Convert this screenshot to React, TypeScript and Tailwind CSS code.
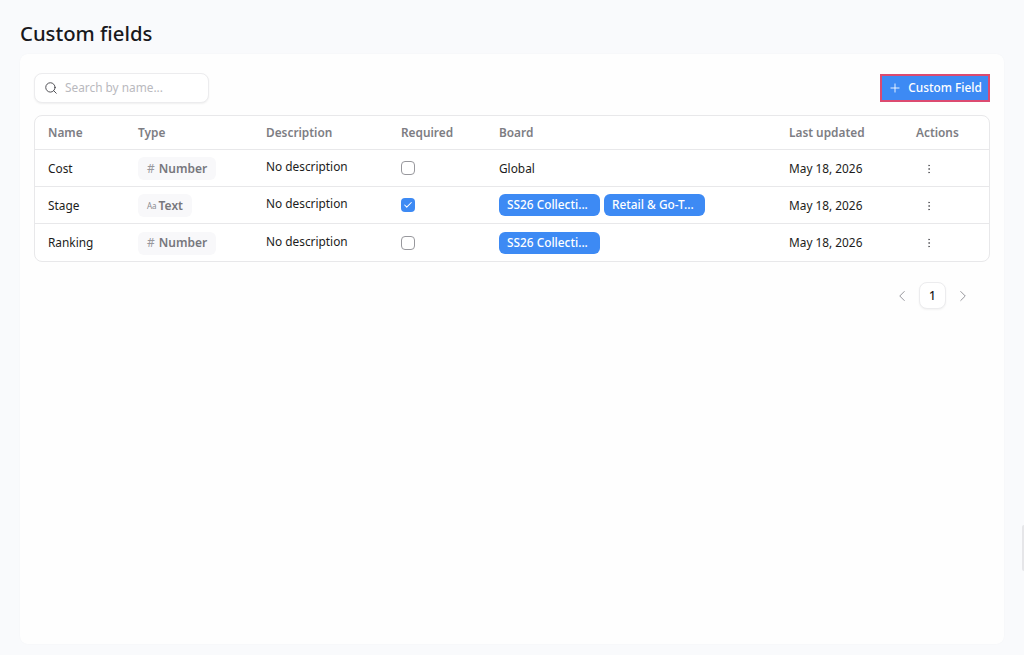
import { Search, Plus, Check, EllipsisVertical, ChevronLeft, ChevronRight } from "lucide-react"

interface FieldRow {
  name: string
  type: "Number" | "Text"
  required: boolean
  boards: string[]
}

const rows: FieldRow[] = [
  { name: "Cost", type: "Number", required: false, boards: [] },
  { name: "Stage", type: "Text", required: true, boards: ["SS26 Collecti...", "Retail & Go-T..."] },
  { name: "Ranking", type: "Number", required: false, boards: ["SS26 Collecti..."] },
]

const headers = ["Name", "Type", "Description", "Required", "Board", "Last updated", "Actions"]

const gridCols = "grid grid-cols-[90px_128px_135px_98px_290px_127px_1fr]"

function TypeBadge({ type }: { type: FieldRow["type"] }) {
  const isNumber = type === "Number"
  return (
    <span className={`inline-flex h-[23px] items-center rounded-md bg-[#f8f8fa] px-[9px] text-[12px] font-semibold text-[#77777d] ${isNumber ? "gap-[4px]" : "gap-[2px]"}`}>
      {isNumber ? (
        <span className="text-[12px] font-normal text-[#98989e]">#</span>
      ) : (
        <span className="text-[8px] font-normal text-[#8a8a90]">Aa</span>
      )}
      {type}
    </span>
  )
}

function Checkbox({ checked }: { checked: boolean }) {
  if (checked) {
    return (
      <span className="flex h-[14px] w-[14px] items-center justify-center rounded-[4px] bg-[#3d8af4]">
        <Check size={10} strokeWidth={2.5} className="text-white" />
      </span>
    )
  }
  return <span className="block h-[14px] w-[14px] rounded-[4px] border border-[#98989d] bg-white" />
}

export default function App() {
  return (
    <div className="relative h-[655px] w-[1024px] overflow-hidden bg-[#f9fafc] px-5 pt-[19px] font-['Noto_Sans',sans-serif] text-[#1c1c20]">
      <h1 className="h-[35px] text-[20.3px] font-medium leading-[28px] text-[#18181c]">Custom fields</h1>

      <div className="h-[590px] w-[984px] rounded-lg bg-[#fefefe] px-[14px] pt-[19px] shadow-[0_0_2px_rgba(0,0,0,0.03)]">
        <div className="flex h-[30px] items-center justify-between">
          <div className="flex h-[30px] w-[175px] items-center gap-[7px] rounded-lg border border-[#ececee] bg-white pl-[9px] shadow-[0_1px_2px_rgba(0,0,0,0.06)]">
            <Search size={14} strokeWidth={1.5} className="text-[#3a3a40]" />
            <span className="text-[11.85px] text-[#b9b9be]">Search by name...</span>
          </div>
          <button className="flex h-[28px] w-[110px] items-center justify-center gap-[6px] border-2 border-[#dc4a70] bg-[#3d8af4] text-[11.85px] font-medium text-white">
            <Plus size={14} strokeWidth={1.5} />
            Custom Field
          </button>
        </div>

        <div className="mt-[12px] w-[956px] rounded-lg border border-[#e8e8ea] bg-white">
          <div className={`${gridCols} h-[34px] items-center border-b border-[#e8e8ea] text-[11.85px] font-semibold text-[#7d7d83]`}>
            {headers.map((h) => (
              <div key={h} className="pl-[13px]">{h}</div>
            ))}
          </div>
          {rows.map((row, i) => {
            const isLast = i === rows.length - 1
            return (
              <div
                key={row.name}
                className={`${gridCols} h-[37px] items-center pt-[1px] text-[11.85px] ${isLast ? "" : "border-b border-[#e8e8ea]"}`}
              >
                <div className="pl-[13px]">{row.name}</div>
                <div className="pl-[13px]"><TypeBadge type={row.type} /></div>
                <div className="pb-[3px] pl-[13px]">No description</div>
                <div className={`pl-[13px] ${isLast ? "" : "pb-[2px]"}`}><Checkbox checked={row.required} /></div>
                <div className={`flex gap-[4px] pl-[13px] ${isLast || row.boards.length === 0 ? "" : "pb-[2px]"}`}>
                  {row.boards.length === 0 && <span>Global</span>}
                  {row.boards.map((b) => (
                    <span key={b} className="flex h-[22px] w-[101px] items-center rounded-md bg-[#3d8af4] pl-[8px] text-[11.85px] font-medium text-white">
                      {b}
                    </span>
                  ))}
                </div>
                <div className="pl-[13px]">May 18, 2026</div>
                <div className="pl-[20px]">
                  <EllipsisVertical size={12} strokeWidth={1.5} className="text-[#55555b]" />
                </div>
              </div>
            )
          })}
        </div>

        <div className="mt-[20px] flex w-[956px] items-center justify-end pr-[18px]">
          <ChevronLeft size={18} strokeWidth={1.25} className="text-[#8e8e94]" />
          <span className="mx-[8px] flex h-[27px] w-[27px] items-center justify-center rounded-lg border border-[#ececee] bg-white text-[12px] font-medium shadow-[0_1px_2px_rgba(0,0,0,0.05)]">
            1
          </span>
          <ChevronRight size={18} strokeWidth={1.25} className="text-[#8e8e94]" />
        </div>
      </div>

      <div className="absolute right-0 top-[525px] h-[46px] w-[2px] rounded-l bg-[#e6e6e9]" />
    </div>
  )
}
